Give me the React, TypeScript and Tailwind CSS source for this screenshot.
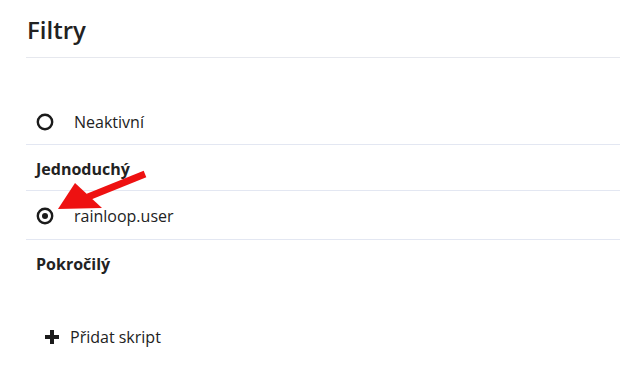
import { Fragment } from 'react'

const FONT = { fontFamily: '"Open Sans", "Noto Sans", sans-serif' }

type Row =
  | { kind: 'group'; label: string }
  | { kind: 'item'; label: string; checked: boolean }

const ROWS: Row[] = [
  { kind: 'item', label: 'Neaktivní', checked: false },
  { kind: 'group', label: 'Jednoduchý' },
  { kind: 'item', label: 'rainloop.user', checked: true },
  { kind: 'group', label: 'Pokročilý' },
]

function Radio({ checked }: { checked: boolean }) {
  return (
    <svg width="18" height="18" viewBox="0 0 18 18" aria-hidden="true">
      <circle cx="9" cy="9" r="7.2" fill="none" stroke="#1b1b1b" strokeWidth="2.4" />
      {checked && <circle cx="9" cy="9" r="3" fill="#1b1b1b" />}
    </svg>
  )
}

export default function App() {
  return (
    <div className="relative h-[388px] w-[620px] overflow-hidden bg-white text-[#222]" style={FONT}>
      <div className="pl-[26px]">
        <h2 className="pt-[14px] pb-[11px] pl-px text-[24px] font-semibold leading-[32px] text-[#222]">Filtry</h2>
        <div className="h-px bg-[#e6e8ee]" />

        <div className="mt-[41px]">
          {ROWS.map((r, i) => (
            <Fragment key={r.label}>
              {r.kind === 'item' ? (
                <div className={`flex items-center pl-[10px] pt-px ${i === 0 ? 'h-[45px]' : 'h-[48px]'}`}>
                  <Radio checked={r.checked} />
                  <span className="ml-[20px] text-[16px] text-[#222]">{r.label}</span>
                </div>
              ) : (
                <div className="flex h-[45px] items-center pl-[10px] pt-[3px] text-[16px] font-bold text-[#222]">{r.label}</div>
              )}
              {i < ROWS.length - 1 && <div className="h-px bg-[#e3e7f2]" />}
            </Fragment>
          ))}
        </div>

        <button type="button" className="mt-[40px] ml-[18px] flex items-center gap-[10px] text-[16px] text-[#222]">
          <svg width="16" height="16" viewBox="0 0 16 16" aria-hidden="true">
            <path d="M6 1h4v5h5v4h-5v5H6v-5H1V6h5z" fill="#1b1b1b" />
          </svg>
          Přidat skript
        </button>
      </div>

      {/* red annotation arrow over the selected filter */}
      <svg className="pointer-events-none absolute left-0 top-0" width="620" height="388" aria-hidden="true">
        <line x1="145" y1="174" x2="88" y2="197" stroke="#ee1111" strokeWidth="7" />
        <polygon points="58,209 75,183 102,208" fill="#ee1111" />
      </svg>
    </div>
  )
}
